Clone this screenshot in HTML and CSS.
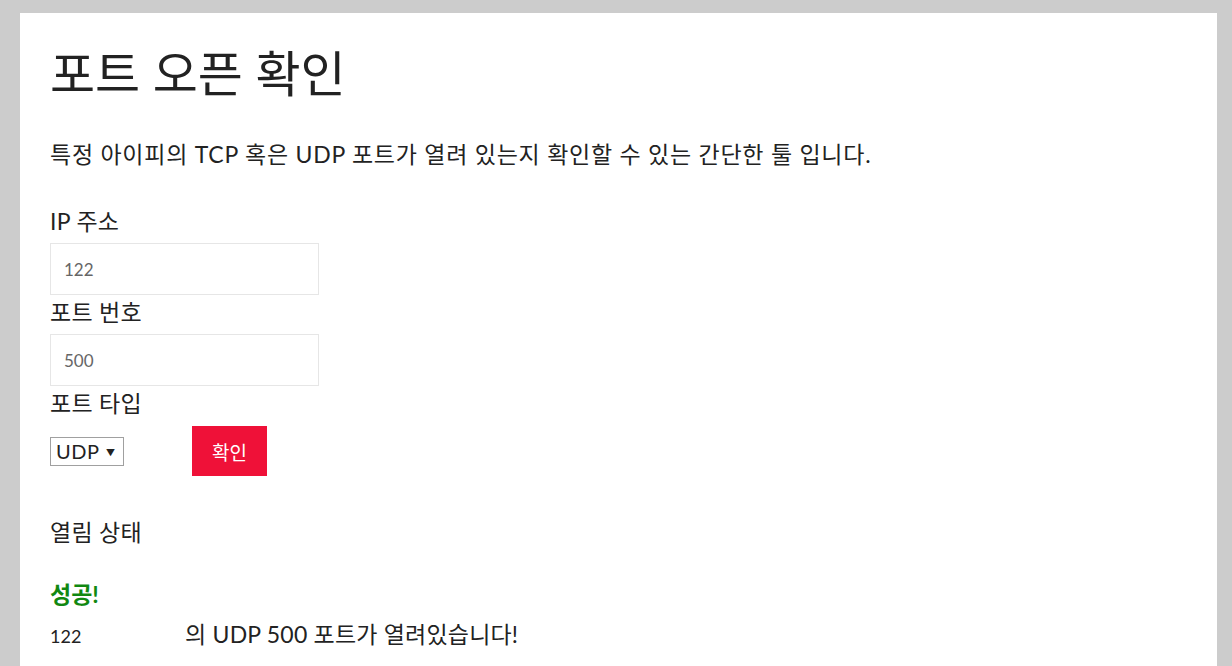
FILE: index.html
```html
<!DOCTYPE html>
<html lang="ko">
<head>
  <meta charset="UTF-8">
  <meta name="viewport" content="width=device-width, initial-scale=1.0">
  <title>포트 오픈 확인</title>
  <link rel="stylesheet" href="styles.css">
</head>
<body>

  <div class="container">
    <h1>포트 오픈 확인</h1>

    <p class="desc">특정 아이피의 TCP 혹은 UDP 포트가 열려 있는지 확인할 수 있는 간단한 툴 입니다.</p>

    <label for="ip">IP 주소</label>
    <input type="text" id="ip" value="122">

    <label for="port">포트 번호</label>
    <input type="text" id="port" value="500">

    <label for="type">포트 타입</label>
    <div class="row">
      <div class="select-wrap">
        <select id="type">
          <option>UDP</option>
          <option>TCP</option>
        </select>
        <span class="arrow">▼</span>
      </div>
      <button>확인</button>
    </div>

    <h3>열림 상태</h3>

    <div class="success">성공!</div>
    <div class="result">
      <span class="res-ip">122</span>
      <span>의 UDP 500 포트가 열려있습니다!</span>
    </div>
  </div>

</body>
</html>
```

FILE: styles.css
```css
body {
  font-family: 'Lato', 'Noto Sans CJK KR', sans-serif;
  background-color: #cccccc;
  margin: 0;
  padding: 13px 15px 0 20px;
  color: #222;
}

.container {
  background-color: #fff;
  padding: 30px 30px 40px 30px;
  min-height: 640px;
}

h1 {
  font-weight: 400;
  font-size: 49px;
  line-height: 60px;
  margin: 0 0 37px 0;
  color: #222;
}

.desc {
  font-size: 23px;
  line-height: 28px;
  margin: 0 0 39px 0;
  letter-spacing: 0.75px;
}

label {
  display: block;
  font-size: 23px;
  line-height: 28px;
  margin-top: 3px;
  letter-spacing: 0.3px;
}

input {
  display: block;
  width: 269px;
  height: 52px;
  box-sizing: border-box;
  border: 1px solid #e6e6e6;
  padding: 0 13px;
  font-family: 'Lato', sans-serif;
  font-size: 17px;
  color: #666;
  margin: 8px 0 0 0;
  outline: none;
}

.row {
  display: flex;
  align-items: center;
  margin-top: 9px;
}

.select-wrap {
  position: relative;
  width: 74px;
  height: 29px;
  margin-right: 68px;
}

select {
  appearance: none;
  -webkit-appearance: none;
  width: 100%;
  height: 100%;
  box-sizing: border-box;
  border: 1px solid #a0a0a0;
  border-radius: 0;
  background: #fff;
  font-family: 'Lato', sans-serif;
  font-size: 20px;
  color: #222;
  padding: 0 0 0 5px;
  letter-spacing: 0.5px;
}

.arrow {
  position: absolute;
  right: 9px;
  top: 9px;
  font-size: 9px;
  color: #222;
  pointer-events: none;
}

button {
  background-color: #ef1138;
  color: #fff;
  border: none;
  width: 75px;
  height: 50px;
  font-family: 'Noto Sans CJK KR', sans-serif;
  font-size: 19px;
  cursor: pointer;
}

h3 {
  font-weight: 400;
  font-size: 23px;
  line-height: 28px;
  margin: 42px 0 34px 0;
  letter-spacing: 0.3px;
}

.success {
  color: #118811;
  font-weight: 700;
  font-size: 23px;
  line-height: 28px;
  margin-bottom: 12px;
}

.result {
  font-size: 23px;
  line-height: 28px;
  letter-spacing: 0.2px;
}

.res-ip {
  display: inline-block;
  width: 129px;
  font-size: 18px;
  letter-spacing: 0;
}
```
